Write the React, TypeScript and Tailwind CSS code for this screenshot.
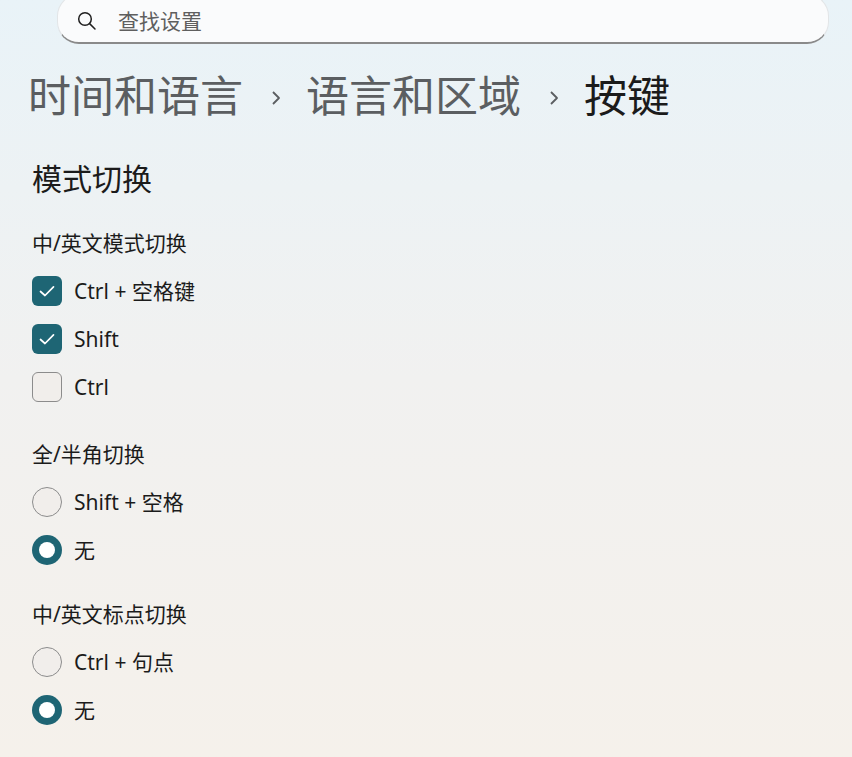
import React from "react";

const font = { fontFamily: "'Noto Sans', 'Noto Sans CJK SC', sans-serif" };

function Check({ checked, label }: { checked: boolean; label: string }) {
  return (
    <div className="flex h-[48px] items-center">
      {checked ? (
        <div className="flex h-[30px] w-[30px] items-center justify-center rounded-[6px] bg-[#1e6574]">
          <svg width="20" height="20" viewBox="0 0 20 20" fill="none">
            <path d="M3.5 10.5 L8 14.5 L16.5 5.8" stroke="white" strokeWidth="1.7" strokeLinecap="round" strokeLinejoin="round" />
          </svg>
        </div>
      ) : (
        <div className="h-[30px] w-[30px] rounded-[6px] border-[1.5px] border-[#8c8c8c] bg-[#f1eeeb]" />
      )}
      <span className="ml-[12px] text-[21px] leading-[28px] text-[#1b1b1b]">{label}</span>
    </div>
  );
}

function Radio({ checked, label }: { checked: boolean; label: string }) {
  return (
    <div className="flex h-[48px] items-center">
      {checked ? (
        <div className="flex h-[30px] w-[30px] items-center justify-center rounded-full bg-[#1e6574]">
          <div className="h-[16px] w-[16px] rounded-full bg-white" />
        </div>
      ) : (
        <div className="h-[30px] w-[30px] rounded-full border-[1.5px] border-[#8c8c8c] bg-[#f1eeeb]" />
      )}
      <span className="ml-[12px] text-[21px] leading-[28px] text-[#1b1b1b]">{label}</span>
    </div>
  );
}

function Chevron() {
  return (
    <svg className="ml-[27px] mr-[24px] mt-[4px]" width="12" height="18" viewBox="0 0 12 18" fill="none">
      <path d="M3 3 L9 9 L3 15" stroke="#5b5e61" strokeWidth="1.8" strokeLinejoin="round" />
    </svg>
  );
}

export default function App() {
  return (
    <div
      className="relative h-[757px] w-[852px] overflow-hidden bg-gradient-to-b from-[#e9f3f8] via-[#f1f1f0] to-[#f5f1eb]"
      style={font}
    >
      <div className="h-[44px]">
        <div className="ml-[57px] mt-[-6px] flex h-[50px] w-[772px] items-center rounded-[22px] border border-[#e2e5e7] border-b-2 border-b-[#8a8a8a] bg-[#fafbfc]">
          <svg className="ml-[19px] mt-[4px]" width="20" height="20" viewBox="0 0 20 20" fill="none">
            <circle cx="8" cy="8" r="6.3" stroke="#1f1f1f" strokeWidth="1.5" />
            <path d="M12.6 12.6 L18 18" stroke="#1f1f1f" strokeWidth="1.5" strokeLinecap="round" />
          </svg>
          <span className="ml-[21px] mt-[4px] text-[21px] leading-[28px] text-[#5f5f5f]">查找设置</span>
        </div>
      </div>

      <div className="mt-[33px] ml-[28px] flex h-[50px] items-center text-[43px] leading-[50px]">
        <span className="text-[#5b5e61]">时间和语言</span>
        <Chevron />
        <span className="text-[#5b5e61]">语言和区域</span>
        <Chevron />
        <span className="text-[#1b1b1b]">按键</span>
      </div>

      <div className="ml-[32px]">
        <div className="mt-[38px] h-[40px] text-[30px] leading-[40px] text-[#1b1b1b]">模式切换</div>

        <div className="mt-[30px] h-[28px] text-[21px] leading-[28px] text-[#1b1b1b]">中/英文模式切换</div>
        <div className="mt-[10px] flex flex-col">
          <Check checked label="Ctrl + 空格键" />
          <Check checked label="Shift" />
          <Check checked={false} label="Ctrl" />
        </div>

        <div className="mt-[29px] h-[28px] text-[21px] leading-[28px] text-[#1b1b1b]">全/半角切换</div>
        <div className="mt-[10px] flex flex-col">
          <Radio checked={false} label="Shift + 空格" />
          <Radio checked label="无" />
        </div>

        <div className="mt-[26px] h-[28px] text-[21px] leading-[28px] text-[#1b1b1b]">中/英文标点切换</div>
        <div className="mt-[10px] flex flex-col">
          <Radio checked={false} label="Ctrl + 句点" />
          <Radio checked label="无" />
        </div>
      </div>
    </div>
  );
}
